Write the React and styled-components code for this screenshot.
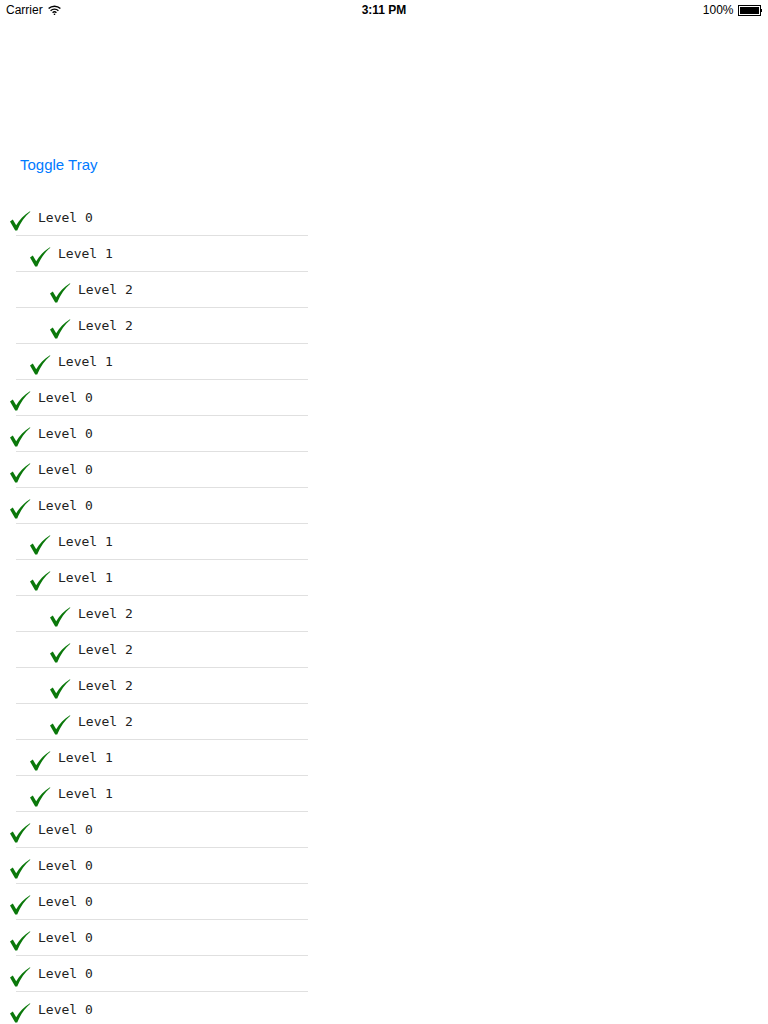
import React from "react";
import styled, { createGlobalStyle } from "styled-components";

const Global = createGlobalStyle`
  html, body { margin: 0; padding: 0; background: #fff; }
  body { font-family: "Liberation Sans", Arial, sans-serif; }
`;

const Page = styled.div`
  width: 768px;
  height: 1024px;
  overflow: hidden;
  background: #fff;
  display: flex;
  flex-direction: column;
  & > * { flex-shrink: 0; }
`;

const StatusBar = styled.div`
  height: 20px;
  display: grid;
  grid-template-columns: 1fr auto 1fr;
  align-items: center;
  padding: 0 6px;
  font-size: 12px;
  color: #000;
`;

const Left = styled.div`
  display: flex;
  align-items: center;
  gap: 5px;
`;

const Time = styled.div`
  font-weight: bold;
  font-size: 12px;
`;

const Right = styled.div`
  display: flex;
  align-items: center;
  justify-content: flex-end;
  gap: 4px;
`;

const Battery = styled.div`
  display: flex;
  align-items: center;
`;

const BatteryBody = styled.div`
  width: 19px;
  height: 7px;
  border: 1px solid #000;
  padding: 1px;
  box-sizing: content-box;
  & > div { width: 100%; height: 100%; background: #000; }
`;

const BatteryTip = styled.div`
  width: 1.5px;
  height: 3px;
  background: #000;
`;

const ToggleButton = styled.div`
  margin-top: 136px;
  padding-left: 20px;
  height: 18px;
  line-height: 18px;
  font-family: "Liberation Sans", Arial, sans-serif;
  font-size: 15px;
  color: #007aff;
`;

const List = styled.div`
  margin-top: 26px;
  width: 308px;
  display: flex;
  flex-direction: column;
`;

const Row = styled.div`
  position: relative;
  height: 36px;
  flex: none;
  display: flex;
  align-items: center;
  padding-left: ${(p) => 9 + p.$level * 20}px;
  box-sizing: border-box;
  &::after {
    content: "";
    position: absolute;
    left: 16px;
    right: 0;
    bottom: 0;
    height: 1px;
    background: #e0e0e0;
  }
`;

const CheckBox = styled.div`
  width: 22px;
  height: 22px;
  margin-top: 6px;
  margin-right: 7px;
  flex: none;
`;

const Label = styled.span`
  font-family: "DejaVu Sans Mono", "Liberation Mono", monospace;
  font-size: 13px;
  color: #222;
  margin-top: -2px;
`;

const Check = () => (
  <CheckBox>
    <svg width="22" height="22" viewBox="0 0 22 22">
      <path
        d="M1 11.5 L3.8 9.6 L7.2 15.3 C10.5 9.8 15 4.8 21 1.2 L21.3 1.8 C15.8 6.2 11.6 12.4 8.2 20.5 L6.2 20.5 Z"
        fill="#0a780a"
      />
    </svg>
  </CheckBox>
);

const Wifi = () => (
  <svg width="13" height="10" viewBox="0 0 13 10">
    <path d="M0.6 3.6 A8.5 8.5 0 0 1 12.4 3.6" stroke="#000" strokeWidth="1.4" fill="none" />
    <path d="M2.6 5.7 A5.6 5.6 0 0 1 10.4 5.7" stroke="#000" strokeWidth="1.4" fill="none" />
    <path d="M4.6 7.8 A2.7 2.7 0 0 1 8.4 7.8" stroke="#000" strokeWidth="1.4" fill="none" />
    <circle cx="6.5" cy="9.3" r="0.8" fill="#000" />
  </svg>
);

const levels = [0, 1, 2, 2, 1, 0, 0, 0, 0, 1, 1, 2, 2, 2, 2, 1, 1, 0, 0, 0, 0, 0, 0];

export default function App() {
  return (
    <Page>
      <Global />
      <StatusBar>
        <Left>
          <span>Carrier</span>
          <Wifi />
        </Left>
        <Time>3:11 PM</Time>
        <Right>
          <span>100%</span>
          <Battery>
            <BatteryBody>
              <div />
            </BatteryBody>
            <BatteryTip />
          </Battery>
        </Right>
      </StatusBar>
      <ToggleButton>Toggle Tray</ToggleButton>
      <List>
        {levels.map((l, i) => (
          <Row key={i} $level={l}>
            <Check />
            <Label>Level {l}</Label>
          </Row>
        ))}
      </List>
    </Page>
  );
}
